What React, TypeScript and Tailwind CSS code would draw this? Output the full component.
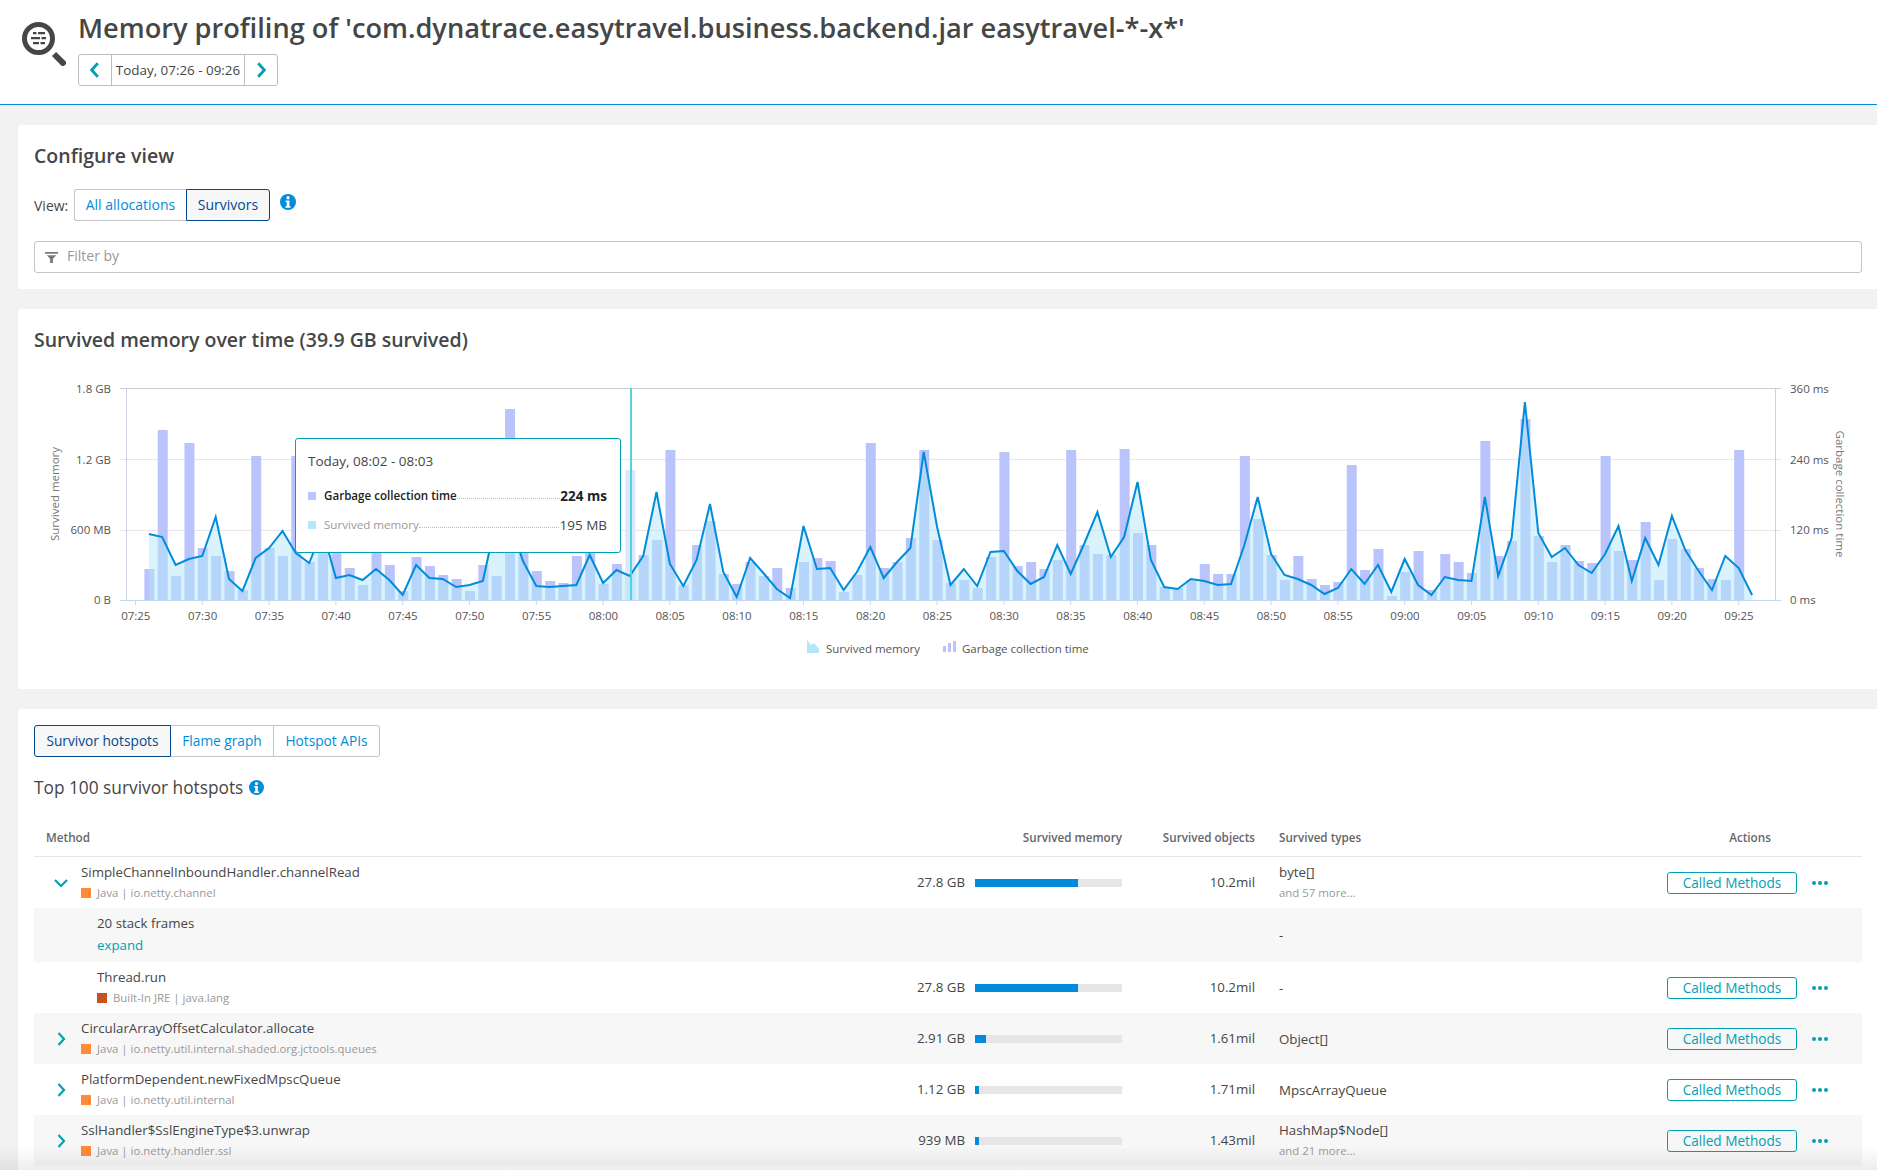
import React from "react";

const F = { fontFamily: '"Open Sans", "Noto Sans", sans-serif' };

const gc = [31,170,24,157,52,44,29,10,144,52,44,144,38,60,55,32,15,60,35,9,43,34,25,21,9,35,24,191,50,29,19,17,44,55,16,36,130,45,60,150,15,55,79,26,16,38,24,32,12,38,42,39,8,25,157,32,38,62,150,60,17,20,12,43,148,34,38,31,40,150,55,46,45,151,67,55,13,12,20,36,26,26,144,81,45,20,44,21,15,18,135,30,51,4,28,49,10,46,38,27,159,44,59,181,64,38,55,39,37,144,49,40,78,20,61,51,32,21,20,150];
const mem = [66,63,35,41,44,83,21,9,42,52,69,47,37,70,22,25,20,31,20,5,35,22,21,13,15,19,80,80,39,14,13,14,15,45,17,30,24,44,108,36,14,40,96,28,3,42,27,11,2,74,31,32,10,28,53,22,38,52,148,73,15,31,14,48,49,29,16,23,55,26,56,88,43,63,118,40,13,11,21,19,15,16,55,103,46,25,21,15,6,12,31,16,35,8,41,15,5,23,20,19,103,24,62,198,67,43,52,35,27,46,74,19,62,35,84,50,29,10,44,32,5];
const X = (m: number) => 135.5 + 13.36 * m;
const BASE = 600;
const linePts = mem.map((v, i) => `${X(i + 1).toFixed(1)},${BASE - v}`).join(" ");
const areaPts = `${X(1).toFixed(1)},${BASE} ${linePts} ${X(121).toFixed(1)},${BASE}`;
const ticks = ["07:25","07:30","07:35","07:40","07:45","07:50","07:55","08:00","08:05","08:10","08:15","08:20","08:25","08:30","08:35","08:40","08:45","08:50","08:55","09:00","09:05","09:10","09:15","09:20","09:25"];

function Info({ className }: { className: string }) {
  return (
    <svg viewBox="0 0 16 16" className={className}>
      <circle cx="8" cy="8" r="8" fill="#008cdb" />
      <circle cx="8" cy="3.8" r="1.7" fill="#fff" />
      <path d="M5.6 6.4h3.8v5.8h1.2v1.6H5.4v-1.6h1.3V8H5.6z" fill="#fff" />
    </svg>
  );
}

function Chev({ dir, className, w = 2.5 }: { dir: "left" | "right" | "down"; className: string; w?: number }) {
  const d = dir === "left" ? "M10.5 2 5 8l5.5 6" : dir === "right" ? "M5.5 2 11 8l-5.5 6" : "M2 5l6 6 6-6";
  return (
    <svg viewBox="0 0 16 16" className={className} fill="none" stroke="#00a1b2" strokeWidth={w}>
      <path d={d} />
    </svg>
  );
}

function Chart() {
  return (
    <svg width="1844" height="300" viewBox="18 380 1844 300" className="block absolute left-0 top-[71px]" style={F}>
      <line x1="120" x2="1781" y1="388.5" y2="388.5" stroke="#ccc" />
      <line x1="120" x2="1781" y1="459.5" y2="459.5" stroke="#e6e6e6" />
      <line x1="120" x2="1781" y1="530.5" y2="530.5" stroke="#e6e6e6" />
      {gc.map((h, i) => (
        <rect key={i} x={X(i + 1) - 4.5} y={BASE - h} width="10" height={h} fill={i === 36 ? "#dce6fd" : "#b9c4fd"} />
      ))}
      <polygon points={areaPts} fill="#b4e5f9" fillOpacity="0.5" />
      <polyline points={linePts} fill="none" stroke="#008cdb" strokeWidth="2" strokeLinejoin="miter" />
      <line x1="126.5" x2="126.5" y1="388" y2="600" stroke="#c9cfe6" />
      <line x1="1775.5" x2="1775.5" y1="388" y2="600" stroke="#c9cfe6" />
      <line x1="120" x2="1781" y1="600.5" y2="600.5" stroke="#c9d6f0" />
      <line x1="631" x2="631" y1="388" y2="600" stroke="#4fd5e0" strokeWidth="2" />
      {ticks.map((t, i) => (
        <g key={t}>
          <line x1={X(i * 5)} x2={X(i * 5)} y1="600" y2="605" stroke="#c9d6f0" />
          <text x={X(i * 5) + 0.3} y="620" textAnchor="middle" fontSize="11.5" fill="#555">{t}</text>
        </g>
      ))}
      {[["1.8 GB", 393], ["1.2 GB", 464], ["600 MB", 534], ["0 B", 604]].map(([t, y]) => (
        <text key={t} x="111" y={y} textAnchor="end" fontSize="11.5" fill="#555">{t}</text>
      ))}
      {[["360 ms", 393], ["240 ms", 464], ["120 ms", 534], ["0 ms", 604]].map(([t, y]) => (
        <text key={t} x="1790" y={y} fontSize="11.5" fill="#555">{t}</text>
      ))}
      <text transform="translate(59 494) rotate(-90)" textAnchor="middle" fontSize="11.5" fill="#777">Survived memory</text>
      <text transform="translate(1836 494) rotate(90)" textAnchor="middle" fontSize="11.5" fill="#777">Garbage collection time</text>
      <path d="M807 653v-13l4 5 3-2 5 6v4z" fill="#b4e5f9" />
      <text x="826" y="653" fontSize="11.5" fill="#555">Survived memory</text>
      <path d="M943 646h3v6h-3zM948 643h3v9h-3zM953 641h3v11h-3z" fill="#b9c4fd" />
      <text x="962" y="653" fontSize="11.5" fill="#555">Garbage collection time</text>
    </svg>
  );
}

function Tooltip() {
  return (
    <div className="absolute left-[277px] top-[129px] w-[326px] h-[115px] bg-white border border-[#00a1b2] rounded-[3px] pl-[12px] pr-[13px] pt-[12px] text-[13.5px] text-[#454646]">
      <div className="leading-[20px] mb-[15px]">Today, 08:02 - 08:03</div>
      <div className="flex items-center h-[20px] mb-[9px]">
        <span className="w-2 h-2 bg-[#b9c4fd] mr-2" />
        <span className="text-[11.6px] font-semibold text-[#222]">Garbage collection time</span>
        <span className="flex-1 border-b border-dotted border-[#bbb] mt-[5px]" />
        <span className="text-[13.5px] font-bold text-[#222]">224 ms</span>
      </div>
      <div className="flex items-center h-[20px]">
        <span className="w-2 h-2 bg-[#b4e5f9] mr-2" />
        <span className="text-[11.6px] text-[#999]">Survived memory</span>
        <span className="flex-1 border-b border-dotted border-[#bbb] mt-[5px]" />
        <span className="text-[13.5px] text-[#454646]">195 MB</span>
      </div>
    </div>
  );
}

type Row = {
  name: string; sub?: string; color?: string; mem?: string; pct?: number; objs?: string;
  type: string; more?: string; chev?: "right" | "down"; shade?: boolean; indent?: boolean; expand?: boolean; h: string;
};

const rows: Row[] = [
  { name: "SimpleChannelInboundHandler.channelRead", sub: "Java | io.netty.channel", color: "#ff8b37", mem: "27.8 GB", pct: 103, objs: "10.2mil", type: "byte[]", more: "and 57 more...", chev: "down", h: "h-[51px]" },
  { name: "20 stack frames", expand: true, type: "-", shade: true, indent: true, h: "h-[54px]" },
  { name: "Thread.run", sub: "Built-In JRE | java.lang", color: "#c9511d", mem: "27.8 GB", pct: 103, objs: "10.2mil", type: "-", indent: true, h: "h-[51px]" },
  { name: "CircularArrayOffsetCalculator.allocate", sub: "Java | io.netty.util.internal.shaded.org.jctools.queues", color: "#ff8b37", mem: "2.91 GB", pct: 11, objs: "1.61mil", type: "Object[]", chev: "right", shade: true, h: "h-[51px]" },
  { name: "PlatformDependent.newFixedMpscQueue", sub: "Java | io.netty.util.internal", color: "#ff8b37", mem: "1.12 GB", pct: 4, objs: "1.71mil", type: "MpscArrayQueue", chev: "right", h: "h-[51px]" },
  { name: "SslHandler$SslEngineType$3.unwrap", sub: "Java | io.netty.handler.ssl", color: "#ff8b37", mem: "939 MB", pct: 4, objs: "1.43mil", type: "HashMap$Node[]", more: "and 21 more...", chev: "right", shade: true, h: "h-[51px]" },
];

const grid = "grid grid-cols-[47px_894px_147px_133px_24px_388px_130px_1fr]";

function TableRow({ r }: { r: Row }) {
  return (
    <div className={`${grid} items-center ${r.h} ${r.shade ? "bg-[#f7f7f7]" : "bg-white"}`}>
      <div className="flex justify-center pl-[7px]">
        {r.chev && <Chev dir={r.chev} className="w-[16px] h-[16px]" w={2.2} />}
      </div>
      <div className={`flex items-center ${r.indent ? "pl-[16px]" : ""}`}>
        <div className={`flex-1 flex flex-col ${r.expand ? "gap-[4px] pb-[2px]" : "gap-[3px]"}`}>
          <div className="text-[13.3px] leading-[18px] text-[#454646]">{r.name}</div>
          {r.sub && (
            <div className="flex items-center text-[11.4px] leading-[18px] text-[#999]">
              <span className="w-[10px] h-[10px] mr-[6px]" style={{ background: r.color }} />
              {r.sub}
            </div>
          )}
          {r.expand && <div className="text-[13.3px] leading-[18px] text-[#00a1b2]">expand</div>}
        </div>
        {r.mem && <div className="text-[13.3px] text-[#454646] pr-[10px]">{r.mem}</div>}
      </div>
      <div>
        {r.pct && (
          <div className="h-2 bg-[#e6e6e6]">
            <div className="h-2 bg-[#008cdb]" style={{ width: r.pct }} />
          </div>
        )}
      </div>
      <div className="text-right text-[13.3px] text-[#454646]">{r.objs}</div>
      <div />
      <div className="flex flex-col gap-[3px]">
        <div className="text-[13.3px] leading-[18px] text-[#454646]">{r.type}</div>
        {r.more && <div className="text-[11.4px] leading-[18px] text-[#999]">{r.more}</div>}
      </div>
      <div>
        {r.mem && (
          <div className="h-[22px] border border-[#00a1b2] rounded-[3px] text-[13.6px] leading-[20px] text-center text-[#00a1b2]">Called Methods</div>
        )}
      </div>
      <div className="flex pl-[15px] gap-[2px]">
        {r.mem && [0, 1, 2].map((i) => <span key={i} className="w-[4px] h-[4px] rounded-full bg-[#00a1b2]" />)}
      </div>
    </div>
  );
}

export default function App() {
  return (
    <div className="relative h-screen overflow-hidden bg-[#f2f2f2] text-[#454646]" style={F}>
      <header className="h-[105px] bg-white border-b border-[#008cdb] flex pl-[22px] pt-[5px]">
        <svg viewBox="0 0 44 44" className="w-[44px] h-[44px] mt-[17px] mr-[12px]">
          <circle cx="16.5" cy="16.5" r="14" fill="#fff" stroke="#454646" strokeWidth="5" />
          <path d="M32 32l11 11" stroke="#454646" strokeWidth="6" />
          <path d="M11 10h3.5v2.2H11zM16 10h7v2.2h-7zM9 15h9v2.2H9zM19.5 15h4.5v2.2h-4.5zM11 20h6v2.2h-6zM18.5 20h4.5v2.2h-4.5z" fill="#454646" />
        </svg>
        <div>
          <h1 className="text-[27.2px] leading-[45px] font-semibold text-[#454646] whitespace-nowrap">Memory profiling of 'com.dynatrace.easytravel.business.backend.jar easytravel-*-x*'</h1>
          <div className="flex h-[32px] w-[200px] mt-[4px] border border-[#bdbdbd] rounded-[3px] items-stretch">
            <div className="w-[33px] flex items-center justify-center border-r border-[#bdbdbd]"><Chev dir="left" className="w-[18px] h-[18px]" /></div>
            <div className="flex-1 text-[13.4px] leading-[30px] text-center whitespace-nowrap">Today, 07:26 - 09:26</div>
            <div className="w-[33px] flex items-center justify-center border-l border-[#bdbdbd]"><Chev dir="right" className="w-[18px] h-[18px]" /></div>
          </div>
        </div>
      </header>

      <main className="flex flex-col gap-[20px] pt-[20px] pl-[18px]">
        <section className="h-[164px] bg-white rounded-l-[3px] pl-[16px] pr-[15px] pt-[18px]">
          <h2 className="text-[19.5px] leading-[26px] font-semibold">Configure view</h2>
          <div className="flex items-center h-[32px] mt-[20px]">
            <span className="text-[14px] w-[40px]">View:</span>
            <div className="flex h-[32px] text-[14px]">
              <div className="w-[112px] border border-r-0 border-[#c4c4c4] rounded-l-[3px] leading-[30px] text-center text-[#008cdb]">All allocations</div>
              <div className="w-[84px] border border-[#00498f] rounded-r-[3px] bg-[#f7f7f7] leading-[30px] text-center text-[#00498f]">Survivors</div>
            </div>
            <Info className="w-[16px] h-[16px] ml-[10px] -mt-[6px]" />
          </div>
          <div className="flex items-center h-[32px] mt-[20px] border border-[#c4c4c4] rounded-[3px] pl-[10px] text-[14px] leading-[28px] text-[#999]">
            <svg viewBox="0 0 14 14" className="w-[13px] h-[13px] mr-[9px]">
              <path d="M0 1h14v2H0zM2 4.5h10L8.5 8.5V13h-3V8.5z" fill="#7a7a7a" />
            </svg>
            <span className="-mt-[2px]">Filter by</span>
          </div>
        </section>

        <section className="relative h-[380px] bg-white rounded-l-[3px] px-[16px] pt-[18px]">
          <h2 className="text-[19.5px] leading-[26px] font-semibold">Survived memory over time (39.9 GB survived)</h2>
          <Chart />
          <Tooltip />
        </section>

        <section className="bg-white rounded-l-[3px] pl-[16px] pr-[15px] pt-[16px] h-[600px]">
          <div className="flex h-[32px] text-[13.7px]">
            <div className="w-[137px] border border-[#00498f] rounded-l-[3px] bg-[#f7f7f7] leading-[30px] text-center text-[#00498f]">Survivor hotspots</div>
            <div className="w-[102px] border-y border-[#c4c4c4] leading-[30px] text-center text-[#008cdb]">Flame graph</div>
            <div className="w-[107px] border border-[#c4c4c4] rounded-r-[3px] leading-[30px] text-center text-[#008cdb]">Hotspot APIs</div>
          </div>
          <div className="flex items-center h-[26px] mt-[18px] text-[17.3px]">
            Top 100 survivor hotspots
            <Info className="w-[15px] h-[15px] ml-[6px] -mt-[1px]" />
          </div>
          <div className={`${grid} items-center h-[38px] mt-[18px] border-b border-[#e6e6e6] text-[11.7px] font-semibold text-[#666]`}>
            <div className="col-span-2 pl-[12px]">Method</div>
            <div className="text-right whitespace-nowrap -ml-[20px]">Survived memory</div>
            <div className="text-right">Survived objects</div>
            <div />
            <div>Survived types</div>
            <div className="text-center pl-[18px] -mr-[18px]">Actions</div>
          </div>
          {rows.map((r) => <TableRow key={r.name} r={r} />)}
        </section>
      </main>
      <div className="absolute left-0 right-0 bottom-0 h-[24px] bg-gradient-to-b from-transparent to-[#00000012]" />
    </div>
  );
}
